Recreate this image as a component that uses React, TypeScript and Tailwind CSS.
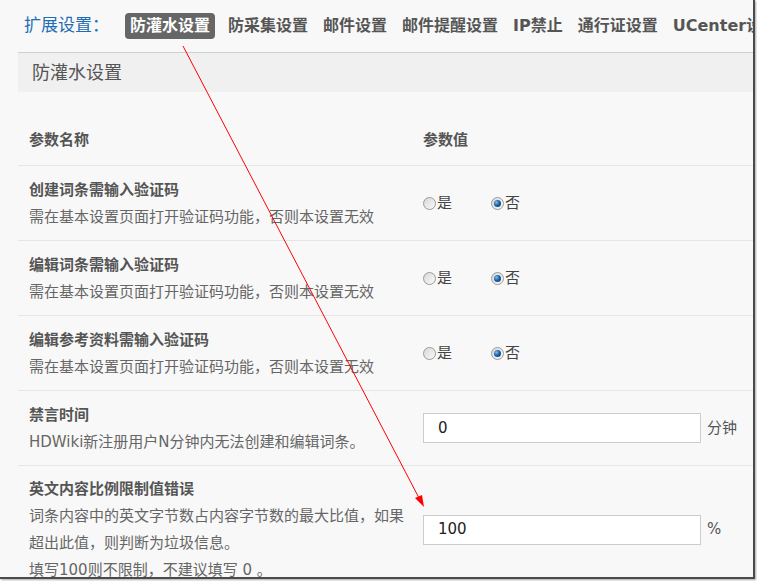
import React from 'react';

type Row = {
  title: string;
  desc: React.ReactNode[];
  kind: 'radio' | 'input';
  value?: string;
  unit?: string;
};

const ROWS: Row[] = [
  { title: '创建词条需输入验证码', desc: ['需在基本设置页面打开验证码功能，否则本设置无效'], kind: 'radio' },
  { title: '编辑词条需输入验证码', desc: ['需在基本设置页面打开验证码功能，否则本设置无效'], kind: 'radio' },
  { title: '编辑参考资料需输入验证码', desc: ['需在基本设置页面打开验证码功能，否则本设置无效'], kind: 'radio' },
  { title: '禁言时间', desc: ['HDWiki新注册用户N分钟内无法创建和编辑词条。'], kind: 'input', value: '0', unit: '分钟' },
  {
    title: '英文内容比例限制值错误',
    desc: ['词条内容中的英文字节数占内容字节数的最大比值，如果', '超出此值，则判断为垃圾信息。', '填写100则不限制，不建议填写 0 。'],
    kind: 'input',
    value: '100',
    unit: '%',
  },
];

const TABS = ['防采集设置', '邮件设置', '邮件提醒设置', 'IP禁止', '通行证设置', 'UCenter设置'];

const Radio = ({ checked, label }: { checked?: boolean; label: string }) => (
  <label className="flex items-center gap-[1px] text-[15px] text-[#444]">
    <span className="w-[13px] h-[13px] rounded-full border border-[#9a9a9a] bg-gradient-to-br from-[#d8d8d8] to-[#fafafa] flex items-center justify-center">
      {checked && (
        <span className="w-[7px] h-[7px] rounded-full bg-[radial-gradient(circle_at_35%_35%,#7fc0f0_0%,#1a63a8_45%,#0b2f5c_100%)]" />
      )}
    </span>
    <span>{label}</span>
  </label>
);

export default function App() {
  return (
    <div className="min-h-screen bg-white" style={{ fontFamily: '"DejaVu Sans", "Noto Sans CJK SC", sans-serif' }}>
      <div className="relative w-[755px] h-[579px] overflow-hidden bg-[#f8f8f8] border-r-2 border-b-2 border-[#4a4a4a] shadow-[1px_1px_2px_rgba(0,0,0,0.35)]">
        <div className="pl-[18px]">
          {/* nav */}
          <div className="h-[53px] border-b border-[#cfcfcf] flex items-center pl-[6px] whitespace-nowrap text-[16px]">
            <span className="text-[#1f6db5] text-[17px] mr-[16px]">扩展设置：</span>
            <span className="bg-[#666] text-white font-bold px-[5px] h-[26px] flex items-center rounded-[4px] mt-[-1px]">防灌水设置</span>
            <div className="flex items-center gap-[15px] ml-[13px] font-bold text-[#555]">
              {TABS.map((t) => (
                <span key={t}>{t}</span>
              ))}
            </div>
          </div>

          {/* section title */}
          <div className="h-[39px] bg-[#f0f0f0] flex items-center pl-[14px] text-[18px] text-[#555]">防灌水设置</div>

          {/* table header */}
          <div className="h-[74px] pt-[24px] border-b border-[#e6e6e6] flex items-center text-[15px] font-bold text-[#555]">
            <div className="w-[405px] pl-[11px]">参数名称</div>
            <div>参数值</div>
          </div>

          {ROWS.map((row, i) => {
            const last = i === ROWS.length - 1;
            return (
              <div
                key={row.title}
                className={`flex items-center border-b border-[#e6e6e6] ${last ? 'py-[9px]' : 'h-[75px]'}`}
              >
                <div className="w-[405px] pl-[11px] pr-[10px]">
                  <div className="text-[15px] leading-[28px] font-bold text-[#555]">{row.title}</div>
                  {row.desc.map((d, j) => (
                    <div key={j} className="text-[15px] leading-[27px] text-[#666] whitespace-nowrap">
                      {d}
                    </div>
                  ))}
                </div>
                {row.kind === 'radio' ? (
                  <div className="flex items-center gap-[39px]">
                    <Radio label="是" />
                    <Radio checked label="否" />
                  </div>
                ) : (
                  <div className="flex items-center">
                    <div className="w-[278px] h-[30px] bg-white border border-[#cccccc] pl-[14px] flex items-center text-[15px] text-[#222]">
                      {row.value}
                    </div>
                    <span className="ml-[6px] text-[15px] text-[#555]">{row.unit}</span>
                  </div>
                )}
              </div>
            );
          })}
        </div>

        {/* annotation arrow */}
        <svg className="absolute inset-0 pointer-events-none" width="755" height="579">
          <line x1="183" y1="46" x2="419" y2="498" stroke="#ff0000" strokeWidth="1" />
          <polygon points="424,507 415,498 422,495" fill="#ff0000" />
        </svg>
      </div>
    </div>
  );
}
